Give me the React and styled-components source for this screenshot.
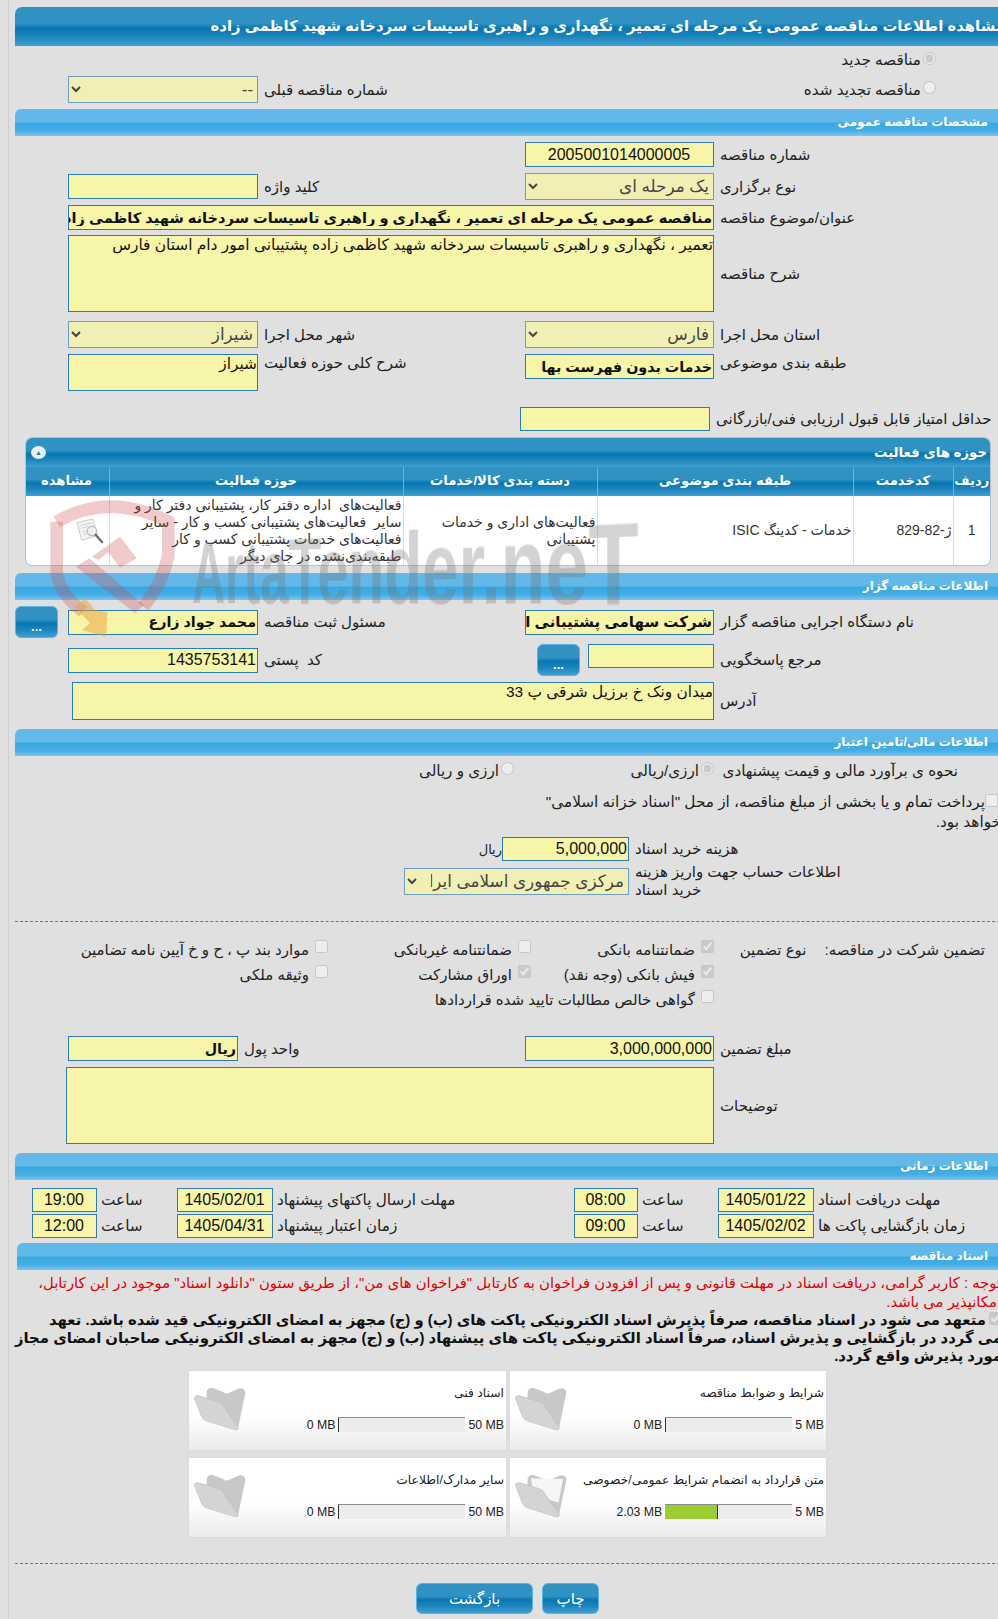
import styled, { createGlobalStyle } from 'styled-components';

const FONT = '"Liberation Sans", "DejaVu Sans", sans-serif';

const GlobalStyle = createGlobalStyle`
    html, body {
        margin: 0;
        padding: 0;
        background: #e0e0e0;
        overflow-x: hidden;
    }
    body {
        font-family: ${FONT};
        font-size: 13px;
        color: #222;
    }
`;

const darkBar = `linear-gradient(#2f92c2 0%, #2f92c2 42%, #0676b2 55%, #1c84bc 75%, #3f9fd2 100%)`;
const lightBar = `linear-gradient(#62b9e9 0%, #62b9e9 48%, #38a8e2 52%, #45ade4 80%, #7cc6ee 100%)`;

const rows = [
    {
        id: 1,
        code: 'ژ-82-829',
        type: 'خدمات - کدینگ ISIC',
        group: 'فعالیت‌های اداری و خدمات پشتیبانی',
        area: 'فعالیت‌های\u00a0 اداره دفتر کار، پشتیبانی دفتر کار و سایر\u00a0 فعالیت‌های پشتیبانی کسب و کار - سایر فعالیت‌های خدمات پشتیبانی کسب و کار طبقه‌بندی‌نشده در جای دیگر',
    },
];

const docs = [
    { title: 'شرایط و ضوابط مناقصه', used: '0 MB', max: '5 MB', pct: 0, full: false },
    { title: 'اسناد فنی', used: '0 MB', max: '50 MB', pct: 0, full: false },
    { title: 'متن قرارداد به انضمام شرایط عمومی/خصوصی', used: '2.03 MB', max: '5 MB', pct: 41, full: true },
    { title: 'سایر مدارک/اطلاعات', used: '0 MB', max: '50 MB', pct: 0, full: false },
];

function FolderIcon({ full }) {
    return (
        <svg width="56" height="46" viewBox="40 80 165 140">
            <path
                d="M82 96 Q86 84 100 86 L132 98 Q142 106 152 100 L178 88 Q196 84 200 100 L178 205 Q174 216 160 210 L80 160 Z"
                fill="#c8c8c8"
            />
            {full && <path d="M92 96 L190 98 L176 170 L100 150 Z" fill="#f6f6f6" />}
            <path
                d="M45 118 Q44 108 58 110 L118 128 Q130 132 136 146 L178 206 Q180 216 164 212 L80 186 Q70 182 66 172 Z"
                fill="#d4d4d4"
                stroke="#bdbdbd"
                strokeWidth="2"
            />
        </svg>
    );
}

function ViewIcon() {
    return (
        <ViewSvg width="30" height="26" viewBox="0 0 32 28">
            <path d="M1 5 L18 1 L23 19 L6 24 Z" fill="#f1f1f1" stroke="#bbb" />
            <path d="M5 8 L17 5 M6 11 L13 9 M7 15 L12 14 M8 18 L13 17" stroke="#c4c4c4" />
            <circle cx="17" cy="14" r="5" fill="#e4eef2" stroke="#aaa" strokeWidth="1.2" />
            <path d="M21 18 L28 26" stroke="#444" strokeWidth="2.4" strokeLinecap="round" />
        </ViewSvg>
    );
}

function Watermark() {
    return (
        <WatermarkLayer>
            <LogoSvg viewBox="0 0 990 450">
                <path
                    d="M110 80 Q270 -10 445 80 L445 180 Q430 260 370 335"
                    fill="none"
                    stroke="rgba(205,70,70,0.28)"
                    strokeWidth="38"
                />
                <path
                    d="M110 80 L110 230 Q120 300 190 350"
                    fill="none"
                    stroke="rgba(205,70,70,0.28)"
                    strokeWidth="38"
                />
                <path d="M215 185 L300 125 L350 190 L300 218 L265 172 L235 195 Z" fill="rgba(205,70,70,0.28)" />
                <path d="M168 215 L208 190 L372 330 L345 355 Z" fill="rgba(205,70,70,0.28)" />
                <path
                    d="M165 335 L195 310 L225 345 L262 352 L258 425 L185 405 L210 385 Z"
                    fill="rgba(232,160,60,0.5)"
                />
            </LogoSvg>
            <WatermarkText>ArtaTender.neT</WatermarkText>
        </WatermarkLayer>
    );
}

export default function App() {
    return (
        <>
            <GlobalStyle />
            <Shell>
                <Content>
                    <TitleBar>
                        مشاهده اطلاعات مناقصه عمومی یک مرحله ای تعمیر ، نگهداری و راهبری تاسیسات سردخانه شهید کاظمی زاده
                    </TitleBar>

                    <RadioLine $mt={4}>
                        <input type="radio" name="renew" checked disabled readOnly />
                        <span>مناقصه جدید</span>
                    </RadioLine>
                    <FieldRow $mt={6}>
                        <RadioLine>
                            <input type="radio" name="renew" disabled />
                            <span>مناقصه تجدید شده</span>
                        </RadioLine>
                        <Spacer />
                        <Label $col={3}>شماره مناقصه قبلی</Label>
                        <Select $h={27}>
                            <option>--</option>
                        </Select>
                    </FieldRow>

                    <SectionBar $mt={6}>مشخصات مناقصه عمومی</SectionBar>

                    <FieldRow $mt={6}>
                        <Label>شماره مناقصه</Label>
                        <Input $center readOnly value="2005001014000005" />
                    </FieldRow>
                    <FieldRow $mt={6}>
                        <Label>نوع برگزاری</Label>
                        <Select $h={27}>
                            <option>یک مرحله ای</option>
                        </Select>
                        <Label>کلید واژه</Label>
                        <Input readOnly value="" />
                    </FieldRow>
                    <FieldRow $mt={5}>
                        <Label>عنوان/موضوع مناقصه</Label>
                        <WideInput
                            $bold
                            $size={14.6}
                            readOnly
                            value="مناقصه عمومی یک مرحله ای تعمیر ، نگهداری و راهبری تاسیسات سردخانه شهید کاظمی زاده"
                        />
                    </FieldRow>
                    <FieldRow $mt={5}>
                        <Label>شرح مناقصه</Label>
                        <WideArea
                            $h={77}
                            readOnly
                            value="تعمیر ، نگهداری و راهبری تاسیسات سردخانه شهید کاظمی زاده پشتیبانی امور دام استان فارس"
                        />
                    </FieldRow>
                    <FieldRow $mt={9}>
                        <Label>استان محل اجرا</Label>
                        <Select $h={27}>
                            <option>فارس</option>
                        </Select>
                        <Label>شهر محل اجرا</Label>
                        <Select $h={27}>
                            <option>شیراز</option>
                        </Select>
                    </FieldRow>
                    <FieldRow $mt={6} $top>
                        <Label>طبقه بندی موضوعی</Label>
                        <Input $bold readOnly value="خدمات بدون فهرست بها" />
                        <Label>شرح کلی حوزه فعالیت</Label>
                        <Area $h={37} readOnly value="شیراز" />
                    </FieldRow>

                    <ScoreRow $mt={16}>
                        <Label>حداقل امتیاز قابل قبول ارزیابی فنی/بازرگانی</Label>
                        <ScoreInput readOnly value="" />
                    </ScoreRow>

                    <TableCard>
                        <TableTitle>
                            <span>حوزه های فعالیت</span>
                            <CollapseDot>▲</CollapseDot>
                        </TableTitle>
                        <Table>
                            <colgroup>
                                <col width="37" />
                                <col width="100" />
                                <col width="256" />
                                <col width="194" />
                                <col width="294" />
                                <col width="85" />
                            </colgroup>
                            <thead>
                                <tr>
                                    <th>ردیف</th>
                                    <th>کدخدمت</th>
                                    <th>طبقه بندی موضوعی</th>
                                    <th>دسته بندی کالا/خدمات</th>
                                    <th>حوزه فعالیت</th>
                                    <th>مشاهده</th>
                                </tr>
                            </thead>
                            <tbody>
                                {rows.map((row) => (
                                    <tr key={row.id}>
                                        <CenterCell>{row.id}</CenterCell>
                                        <td>{row.code}</td>
                                        <td>{row.type}</td>
                                        <td>{row.group}</td>
                                        <td>{row.area}</td>
                                        <ViewCell>
                                            <ViewIcon />
                                        </ViewCell>
                                    </tr>
                                ))}
                            </tbody>
                        </Table>
                    </TableCard>

                    <SectionBar $mt={7}>اطلاعات مناقصه گزار</SectionBar>

                    <FieldRow $mt={6}>
                        <Label>نام دستگاه اجرایی مناقصه گزار</Label>
                        <Input $bold $size={15} readOnly value="شرکت سهامی پشتیبانی امور دام کشور" />
                        <Label>مسئول ثبت مناقصه</Label>
                        <Input $bold readOnly value="محمد جواد زارع" />
                        <DotsButton>...</DotsButton>
                    </FieldRow>
                    <FieldRow $mt={6}>
                        <Label>مرجع پاسخگویی</Label>
                        <LookupCell>
                            <SmallInput readOnly value="" />
                            <DotsButton>...</DotsButton>
                        </LookupCell>
                        <Label>کد{'\u00a0 '}پستی</Label>
                        <Input readOnly value="1435753141" />
                    </FieldRow>
                    <FieldRow $mt={6}>
                        <Label>آدرس</Label>
                        <WideArea $h={38} $inset={4} readOnly value="میدان ونک خ برزیل شرقی پ 33" />
                    </FieldRow>

                    <SectionBar $mt={9}>اطلاعات مالی/تامین اعتبار</SectionBar>

                    <EstimateRow>
                        <span>نحوه ی برآورد مالی و قیمت پیشنهادی</span>
                        <RadioOption>
                            <input type="radio" checked disabled readOnly />
                            ارزی/ریالی
                        </RadioOption>
                        <RadioOption>
                            <input type="radio" disabled />
                            ارزی و ریالی
                        </RadioOption>
                    </EstimateRow>

                    <TreasuryNote>
                        <input type="checkbox" disabled />
                        پرداخت تمام و یا بخشی از مبلغ مناقصه، از محل "اسناد خزانه اسلامی"
                        <br />
                        خواهد بود.
                    </TreasuryNote>

                    <CostRow $mt={5}>
                        <Label>هزینه خرید اسناد</Label>
                        <CostInput readOnly value="5,000,000" />
                        <Unit>ریال</Unit>
                    </CostRow>
                    <CostRow $mt={2}>
                        <Label>
                            اطلاعات حساب جهت واریز هزینه
                            <br />
                            خرید اسناد
                        </Label>
                        <AccountSelect>
                            <option>مرکزی جمهوری اسلامی ایران</option>
                        </AccountSelect>
                    </CostRow>

                    <Dashed $mt={22} />

                    <GuaranteeGrid>
                        <GuaranteeTitle>
                            <span>تضمین شرکت در مناقصه:</span>
                            <span>نوع تضمین</span>
                        </GuaranteeTitle>
                        <Check>
                            <input type="checkbox" checked disabled readOnly />
                            ضمانتنامه بانکی
                        </Check>
                        <Check>
                            <input type="checkbox" disabled />
                            ضمانتنامه غیربانکی
                        </Check>
                        <Check>
                            <input type="checkbox" disabled />
                            موارد بند پ ، ح و خ آیین نامه تضامین
                        </Check>
                        <span />
                        <Check>
                            <input type="checkbox" checked disabled readOnly />
                            فیش بانکی (وجه نقد)
                        </Check>
                        <Check>
                            <input type="checkbox" checked disabled readOnly />
                            اوراق مشارکت
                        </Check>
                        <Check>
                            <input type="checkbox" disabled />
                            وثیقه ملکی
                        </Check>
                        <span />
                        <CheckWide>
                            <input type="checkbox" disabled />
                            گواهی خالص مطالبات تایید شده قراردادها
                        </CheckWide>
                    </GuaranteeGrid>

                    <AmountRow $mt={24}>
                        <Label>مبلغ تضمین</Label>
                        <Input readOnly value="3,000,000,000" />
                        <Label>واحد پول</Label>
                        <Input $bold readOnly value="ریال" />
                    </AmountRow>
                    <FieldRow $mt={6}>
                        <Label>توضیحات</Label>
                        <WideArea $h={77} $outset={2} readOnly value="" />
                    </FieldRow>

                    <SectionBar $mt={9}>اطلاعات زمانی</SectionBar>

                    <TimeRow $mt={8}>
                        <Label>مهلت دریافت اسناد</Label>
                        <TimeInput readOnly value="1405/01/22" />
                        <Label>ساعت</Label>
                        <TimeInput readOnly value="08:00" />
                        <Label>مهلت ارسال پاکتهای پیشنهاد</Label>
                        <TimeInput readOnly value="1405/02/01" />
                        <Label>ساعت</Label>
                        <TimeInput readOnly value="19:00" />
                    </TimeRow>
                    <TimeRow $mt={2}>
                        <Label>زمان بازگشایی پاکت ها</Label>
                        <TimeInput readOnly value="1405/02/02" />
                        <Label>ساعت</Label>
                        <TimeInput readOnly value="09:00" />
                        <Label>زمان اعتبار پیشنهاد</Label>
                        <TimeInput readOnly value="1405/04/31" />
                        <Label>ساعت</Label>
                        <TimeInput readOnly value="12:00" />
                    </TimeRow>

                    <SectionBar $mt={5} $inset={2}>اسناد مناقصه</SectionBar>

                    <Notice>
                        توجه : کاربر گرامی، دریافت اسناد در مهلت قانونی و پس از افزودن فراخوان به کارتابل "فراخوان های من"، از
                        طریق ستون "دانلود اسناد" موجود در این کارتابل، امکانپذیر می باشد.
                    </Notice>
                    <Pledge>
                        <input type="checkbox" checked disabled readOnly />
                        متعهد می شود در اسناد مناقصه، صرفاً پذیرش اسناد الکترونیکی پاکت های (ب) و (ج) مجهز به امضای الکترونیکی
                        قید شده باشد. تعهد
                        <br />
                        می گردد در بازگشایی و پذیرش اسناد، صرفاً اسناد الکترونیکی پاکت های پیشنهاد (ب) و (ج) مجهز به امضای
                        الکترونیکی صاحبان امضای مجاز
                        <br />
                        مورد پذیرش واقع گردد.
                    </Pledge>

                    <DocGrid>
                        {docs.map((doc) => (
                            <DocCard key={doc.title}>
                                <FolderIcon full={doc.full} />
                                <DocInfo>
                                    <DocTitle>{doc.title}</DocTitle>
                                    <DocUsage>
                                        <span>{doc.used}</span>
                                        <Meter>
                                            <MeterFill style={{ width: `${doc.pct}%` }} />
                                        </Meter>
                                        <span>{doc.max}</span>
                                    </DocUsage>
                                </DocInfo>
                            </DocCard>
                        ))}
                    </DocGrid>

                    <Dashed $mt={26} />

                    <Actions>
                        <ActionButton $w={57}>چاپ</ActionButton>
                        <ActionButton $w={117}>بازگشت</ActionButton>
                    </Actions>
                </Content>
                <Watermark />
            </Shell>
        </>
    );
}

const Shell = styled.div`
    position: relative;
    margin-left: 8px;
    padding-left: 6px;
    padding-top: 7px;
    width: 1100px;
    height: 1619px;
    overflow: hidden;
    box-sizing: border-box;
    border-left: 1px solid #cfcfcf;
`;

const Content = styled.div`
    width: 990px;
    direction: rtl;
`;

const TitleBar = styled.div`
    height: 39px;
    line-height: 38px;
    background: ${darkBar};
    border-top-left-radius: 7px;
    color: #fff;
    font-weight: 700;
    font-size: 14.85px;
    white-space: nowrap;
    overflow: hidden;
`;

const SectionBar = styled.div`
    height: 27px;
    line-height: 26px;
    margin-top: ${({ $mt }) => $mt || 0}px;
    margin-left: ${({ $inset }) => $inset || 0}px;
    background: ${lightBar};
    border-top-left-radius: 6px;
    border-top-right-radius: 6px;
    color: #fff;
    font-weight: 700;
    font-size: 12px;
    padding-right: 17px;
`;

const FieldRow = styled.div`
    display: grid;
    grid-template-columns: 291px 189px 267px 190px 53px;
    align-items: ${({ $top }) => ($top ? 'start' : 'center')};
    margin-top: ${({ $mt }) => $mt || 0}px;
`;

const AmountRow = styled(FieldRow)`
    grid-template-columns: 291px 189px 287px 170px 53px;
`;

const Spacer = styled.div``;

const RadioLine = styled.label`
    display: flex;
    align-items: center;
    padding-right: 69px;
    font-size: 15.2px;
    margin-top: ${({ $mt }) => $mt || 0}px;
    height: 20px;
    white-space: nowrap;

    input {
        margin: 0 0 4px 2px;
    }
`;

const Label = styled.label`
    display: block;
    text-align: left;
    padding-left: 6px;
    font-size: 15px;
    white-space: nowrap;
`;

const fieldBase = `
    box-sizing: border-box;
    width: 100%;
    margin: 0;
    padding: 0 0 0 0;
    background: #f7f5a8;
    border: 1px solid #2b7cb3;
    border-radius: 0;
    font-family: ${FONT};
    font-size: 16px;
    color: #111;
    outline: none;
`;

const Input = styled.input`
    ${fieldBase}
    height: 25px;
    padding-right: 1px;
    font-weight: ${({ $bold }) => ($bold ? 700 : 400)};
    text-align: ${({ $center }) => ($center ? 'center' : 'right')};
    font-size: ${({ $bold, $size }) => $size || ($bold ? 14.3 : 16)}px;
`;

const WideInput = styled(Input)`
    grid-column: 2 / span 3;
`;

const Area = styled.textarea`
    ${fieldBase}
    display: block;
    height: ${({ $h }) => $h}px;
    resize: none;
    font-size: 15.4px;
    line-height: 18px;
    overflow: hidden;
`;

const WideArea = styled(Area)`
    grid-column: 2 / span 3;
    width: calc(100% + ${({ $outset }) => $outset || 0}px - ${({ $inset }) => $inset || 0}px);
`;

const Select = styled.select`
    box-sizing: border-box;
    width: 100%;
    height: ${({ $h }) => $h}px;
    margin: 0;
    background: #f2efb4;
    border: 1px solid #6a9fc2;
    font-family: ${FONT};
    font-size: 16.8px;
    color: #444;
`;

const ScoreRow = styled(FieldRow)`
    grid-template-columns: 295px 190px 1fr;
`;

const ScoreInput = styled(Input)`
    height: 24px;
`;

const TableCard = styled.div`
    margin: 6px 14px 0 10px;
    border-radius: 7px;
    overflow: hidden;
    border: 1px solid #a9c6dc;
    background: #fff;
`;

const TableTitle = styled.div`
    display: flex;
    justify-content: space-between;
    align-items: center;
    height: 29px;
    padding: 0 3px 0 5px;
    background: ${darkBar};
    color: #fff;
    font-weight: 700;
    font-size: 13.3px;
`;

const CollapseDot = styled.span`
    display: flex;
    align-items: center;
    justify-content: center;
    width: 15px;
    height: 13px;
    border-radius: 50%;
    background: #e8f2f8;
    color: #1b7db5;
    font-size: 7px;
`;

const Table = styled.table`
    width: 100%;
    border-collapse: collapse;
    table-layout: fixed;

    th {
        height: 29px;
        padding: 0 0 2px;
        box-sizing: border-box;
        background: ${darkBar};
        color: #fff;
        font-size: 13.2px;
        font-weight: 700;
        border-left: 1px solid #6fb4d8;
    }

    td {
        height: 69px;
        box-sizing: border-box;
        padding: 0 1px;
        font-size: 14px;
        line-height: 17px;
        color: #333;
        text-align: right;
        border-left: 1px solid #dcdcdc;
    }
`;

const CenterCell = styled.td`
    && {
        text-align: center;
    }
`;

const ViewCell = styled.td`
    && {
        vertical-align: top;
        padding: 22px 3px 0 0;
    }
`;

const ViewSvg = styled.svg`
    display: block;
    opacity: 0.8;
`;

const DotsButton = styled.button`
    box-sizing: border-box;
    width: 43px;
    height: 32px;
    padding: 8px 0 0;
    background: ${darkBar};
    border: 1px solid #5ab4de;
    border-radius: 6px;
    color: #fff;
    font-weight: 700;
    font-size: 13px;
    justify-self: end;
`;

const LookupCell = styled.div`
    display: flex;
    align-items: flex-start;
    gap: 8px;
`;

const SmallInput = styled(Input)`
    width: 126px;
    height: 24px;
`;

const EstimateRow = styled.div`
    display: grid;
    grid-template-columns: 291px 200px 1fr;
    align-items: center;
    height: 30px;
    font-size: 15.2px;
    white-space: nowrap;

    & > span {
        padding-right: 47px;
    }
`;

const RadioOption = styled.label`
    display: flex;
    align-items: center;
    gap: 2px;

    input {
        margin: 0 0 6px 0;
    }
`;

const TreasuryNote = styled.div`
    padding-right: 4px;
    margin-top: 6px;
    line-height: 20px;
    font-size: 15.3px;

    input {
        margin: 0 3px 0 0;
    }
`;

const CostRow = styled.div`
    display: grid;
    grid-template-columns: 376px 127px auto;
    grid-auto-flow: column;
    align-items: center;
    justify-content: start;
    margin-top: ${({ $mt }) => $mt || 0}px;
`;

const CostInput = styled(Input)`
    height: 24px;
`;

const Unit = styled.span`
    font-size: 13px;
`;

const AccountSelect = styled(Select)`
    grid-column: 2 / span 2;
    width: 225px;
    height: 27px;
    padding-left: 10px;
`;

const Dashed = styled.div`
    margin-top: ${({ $mt }) => $mt}px;
    border-top: 1px dashed #2c86b8;
`;

const GuaranteeGrid = styled.div`
    display: grid;
    grid-template-columns: 291px 183px 203px 1fr;
    grid-auto-rows: 25px;
    align-items: center;
    margin-top: 15px;
    font-size: 15px;
`;

const GuaranteeTitle = styled.div`
    display: flex;
    gap: 18px;
    padding-right: 20px;
    white-space: nowrap;
`;

const Check = styled.label`
    display: flex;
    align-items: center;
    gap: 6px;
    white-space: nowrap;

    input {
        margin: 0 0 6px 0;
    }
`;

const CheckWide = styled(Check)`
    grid-column: 2 / span 3;
`;

const TimeRow = styled.div`
    display: grid;
    grid-template-columns: 191px 96px 80px 64px 301px 96px 80px 65px 17px;
    align-items: center;
    margin-top: ${({ $mt }) => $mt}px;

    ${Label} {
        padding-left: 4px;
        font-size: 15.3px;
    }
`;

const TimeInput = styled(Input)`
    text-align: center;
    height: 24px;
`;

const Notice = styled.p`
    margin: 4px 0 0;
    padding-right: 4px;
    color: #e00000;
    font-size: 14.8px;
    line-height: 18.5px;
`;

const Pledge = styled.p`
    margin: 0;
    padding-right: 3px;
    font-weight: 700;
    font-size: 14.85px;
    line-height: 18px;
    color: #111;
    white-space: nowrap;

    input {
        margin: 0 0 0 3px;
    }
`;

const DocGrid = styled.div`
    display: grid;
    grid-template-columns: 316px 317px;
    gap: 8px 4px;
    margin-top: 6px;
    padding-right: 179px;
`;

const DocCard = styled.div`
    display: flex;
    direction: ltr;
    height: 79px;
    padding: 15px 2px 0 3px;
    box-sizing: border-box;
    background: linear-gradient(#fff 55%, #ebebeb 100%);
    box-shadow: 0 0 2px #ccc;
`;

const DocInfo = styled.div`
    flex: 1;
    display: flex;
    flex-direction: column;
    align-items: flex-end;
    font-size: 12.3px;
    color: #222;
`;

const DocTitle = styled.div`
    direction: rtl;
    height: 31px;
    line-height: 14px;
`;

const DocUsage = styled.div`
    display: flex;
    align-items: center;
    gap: 3px;
`;

const Meter = styled.div`
    width: 127px;
    height: 15px;
    box-sizing: border-box;
    background: #ececec;
    border-top: 1px solid #8c8c8c;
`;

const MeterFill = styled.div`
    height: 100%;
    background: #9acd32;
    border-right: 1px solid #333;
    box-sizing: content-box;
`;

const Actions = styled.div`
    display: flex;
    gap: 9px;
    margin-top: 19px;
    padding-right: 406px;
`;

const ActionButton = styled.button`
    width: ${({ $w }) => $w}px;
    height: 31px;
    background: ${darkBar};
    border: 1px solid #5ab4de;
    border-radius: 6px;
    color: #fff;
    font-family: ${FONT};
    font-size: 15px;
`;

const WatermarkLayer = styled.div`
    position: absolute;
    left: -9px;
    top: 0;
    width: 700px;
    height: 660px;
    pointer-events: none;
`;

const LogoSvg = styled.svg`
    position: absolute;
    left: 20px;
    top: 495px;
    width: 330px;
    height: 150px;
`;

const WatermarkText = styled.span`
    position: absolute;
    left: 192px;
    top: 530px;
    font-family: "Liberation Sans", sans-serif;
    font-weight: 700;
    font-size: 86px;
    line-height: 86px;
    color: rgba(110, 110, 110, 0.3);
    white-space: nowrap;
    transform-origin: 0 71px;
    transform: perspective(685px) rotateY(-30deg) scaleX(0.6);
`;
